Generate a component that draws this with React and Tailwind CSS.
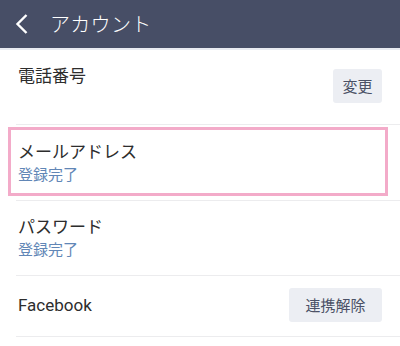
import React from "react";

const jp = { fontFamily: '"Noto Sans CJK JP", "Noto Sans", sans-serif' };
const latin = { fontFamily: 'Roboto, "Noto Sans CJK JP", sans-serif' };

const Row = ({ children, className }) => (
    <div className="pl-4">
        <div className={"border-b border-[#ececee] pl-[2px] pr-[18px] " + className}>
            {children}
        </div>
    </div>
);

const Btn = ({ label, w }) => (
    <button className={"h-[34px] rounded-[3px] bg-[#eceef3] text-[15px] text-[#4b5166] " + w} style={jp}>
        {label}
    </button>
);

const App = () => {
    return (
        <div className="w-[400px] h-[346px] bg-white overflow-hidden" style={jp}>
            {/* header */}
            <div className="h-12 bg-[#474e66] flex items-center">
                <svg width="14" height="22" viewBox="0 0 14 22" className="ml-[15px]">
                    <path d="M11.5 2 L2.5 11 L11.5 20" fill="none" stroke="white" strokeWidth="2.4" />
                </svg>
                <span className="ml-[21px] text-[20px] text-white font-light tracking-[0.3px]">アカウント</span>
            </div>
            <div className="h-[2px] bg-[#e9ebf1]" />

            <Row className="h-[75px] flex justify-between">
                <div className="pt-[13px] text-[17px] leading-[24px] text-[#2d2d2d]">電話番号</div>
                <div className="self-center mt-[-2px]">
                    <Btn label="変更" w="w-[49px]" />
                </div>
            </Row>

            <div className="relative">
                <Row className="h-[76px]">
                    <div className="pt-[14px] text-[17px] leading-[24px] text-[#2d2d2d]">メールアドレス</div>
                    <div className="text-[15px] leading-[22px] text-[#6186b6]">登録完了</div>
                </Row>
                <div className="absolute left-2 top-[2px] w-[380px] h-[69px] border-[3px] border-[#f3abc9]" />
            </div>

            <Row className="h-[75px]">
                <div className="pt-[13px] text-[17px] leading-[24px] text-[#2d2d2d]">パスワード</div>
                <div className="text-[15px] leading-[22px] text-[#6186b6]">登録完了</div>
            </Row>

            <Row className="h-[61px] flex items-center justify-between">
                <div className="text-[17px] text-[#2d2d2d]" style={latin}>Facebook</div>
                <div className="mt-[-2px]">
                    <Btn label="連携解除" w="w-[93px]" />
                </div>
            </Row>
        </div>
    );
};

export default App;
